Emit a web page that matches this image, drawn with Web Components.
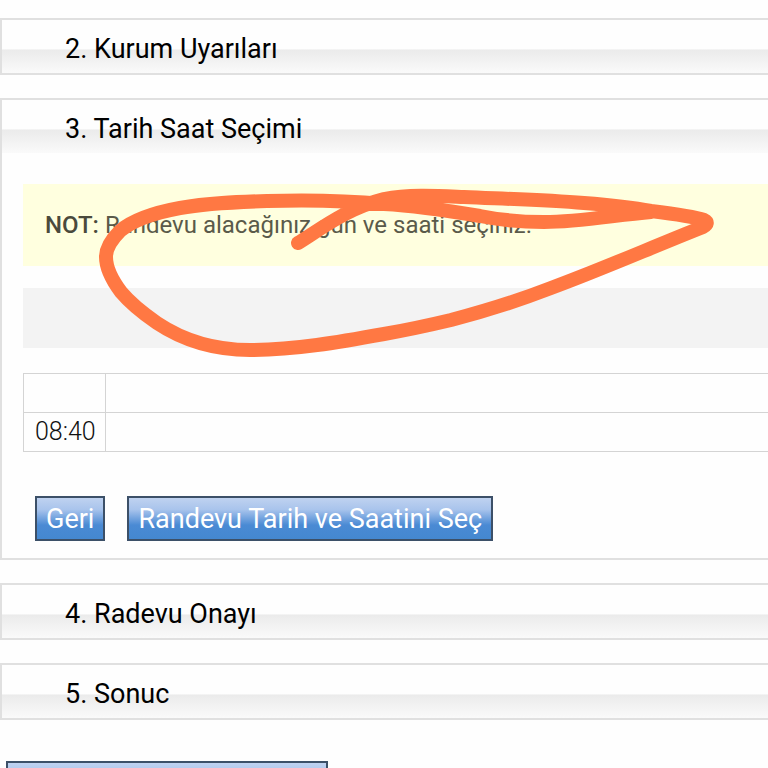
<!DOCTYPE html>
<html lang="tr">
<head>
<meta charset="utf-8">
<meta name="viewport" content="width=device-width, initial-scale=1">
<title>Randevu</title>
<style>
  html { scrollbar-width: none; }
  body {
    margin: 0;
    background: #fefefe;
    color: #111;
    font-family: Roboto, "Liberation Sans", sans-serif;
    font-size: 25px;
    line-height: 30px;
    overflow-x: hidden;
  }
</style>
</head>
<body>
<booking-page>
  <wizard-step label="2. Kurum Uyarıları"></wizard-step>
  <wizard-step label="3. Tarih Saat Seçimi" open>
    <note-box label="NOT:">Randevu alacağınız gün ve saati seçiniz.</note-box>
    <day-bar></day-bar>
    <slot-table times="08:40"></slot-table>
    <button-row>
      <action-button>Geri</action-button>
      <action-button>Randevu Tarih ve Saatini Seç</action-button>
    </button-row>
  </wizard-step>
  <wizard-step label="4. Radevu Onayı"></wizard-step>
  <wizard-step label="5. Sonuc"></wizard-step>
  <action-button slot="footer" wide label="Devam"></action-button>
  <pen-mark slot="overlay"></pen-mark>
</booking-page>

<script>
class BookingPage extends HTMLElement {
  constructor() {
    super();
    this.attachShadow({ mode: 'open' });
  }

  connectedCallback() {
    this.shadowRoot.innerHTML = `
      <style>
        :host {
          display: block;
          position: relative;
          padding-top: 18px;
        }
        main {
          display: flex;
          flex-direction: column;
          gap: 23px;
        }
        footer {
          padding: 41px 0 24px 6px;
        }
      </style>
      <main><slot></slot></main>
      <footer><slot name="footer"></slot></footer>
      <slot name="overlay"></slot>
    `;
  }
}

class WizardStep extends HTMLElement {
  constructor() {
    super();
    this.attachShadow({ mode: 'open' });
  }

  connectedCallback() {
    const label = this.getAttribute('label');
    const open = this.hasAttribute('open');
    this.shadowRoot.innerHTML = `
      <style>
        :host {
          display: block;
          border: 2px solid #e0e0e0;
          border-right: 0;
          background: #fefefe;
        }
        h2 {
          margin: 0;
          padding: 14px 24px 9px 63px;
          font-size: 27px;
          line-height: 30px;
          font-weight: 400;
          color: #000;
          background: linear-gradient(#fefefe 0 54%, #ebebeb 57%, #fafafa 100%);
        }
        .body {
          padding: 31px 0 17px 21px;
        }
      </style>
      <section>
        <h2>${label}</h2>
        ${open ? '<div class="body"><slot></slot></div>' : ''}
      </section>
    `;
  }
}

class NoteBox extends HTMLElement {
  constructor() {
    super();
    this.attachShadow({ mode: 'open' });
  }

  connectedCallback() {
    this.shadowRoot.innerHTML = `
      <style>
        :host {
          display: block;
          padding: 26px 22px;
          background: #ffffdf;
          color: #5a5a4a;
          font-size: 24px;
          font-weight: 400;
        }
        strong {
          color: #4a4a3c;
          font-weight: 500;
        }
      </style>
      <strong>${this.getAttribute('label')}</strong> <slot></slot>
    `;
  }
}

class DayBar extends HTMLElement {
  constructor() {
    super();
    this.attachShadow({ mode: 'open' });
  }

  connectedCallback() {
    this.shadowRoot.innerHTML = `
      <style>
        :host {
          display: block;
          min-height: 60px;
          margin: 22px 0 25px;
          background: #f3f3f3;
        }
      </style>
    `;
  }
}

class SlotTable extends HTMLElement {
  constructor() {
    super();
    this.attachShadow({ mode: 'open' });
  }

  connectedCallback() {
    const times = this.getAttribute('times').split(',');
    this.shadowRoot.innerHTML = `
      <style>
        :host { display: block; }
        table {
          width: 100%;
          border-collapse: collapse;
          font-weight: 300;
        }
        th, td {
          height: 30px;
          padding: 4px 9px 4px 11px;
          border: 1px solid #d4d4d4;
          border-right: 0;
          font-weight: inherit;
          text-align: left;
        }
        th:first-child, td:first-child { width: 59px; }
      </style>
      <table>
        <thead><tr><th></th><th></th></tr></thead>
        <tbody>
          ${times.map(time => `<tr><td>${time}</td><td></td></tr>`).join('')}
        </tbody>
      </table>
    `;
  }
}

class ButtonRow extends HTMLElement {
  constructor() {
    super();
    this.attachShadow({ mode: 'open' });
  }

  connectedCallback() {
    this.shadowRoot.innerHTML = `
      <style>
        :host {
          display: flex;
          flex-wrap: wrap;
          gap: 22px;
          padding: 44px 12px 0;
        }
      </style>
      <slot></slot>
    `;
  }
}

class ActionButton extends HTMLElement {
  constructor() {
    super();
    this.attachShadow({ mode: 'open' });
  }

  connectedCallback() {
    const label = this.getAttribute('label');
    this.shadowRoot.innerHTML = `
      <style>
        :host { display: inline-flex; }
        button {
          min-height: 45px;
          padding: 6px 9px 5px;
          border: 2px solid #3c5068;
          border-radius: 0;
          background: linear-gradient(#bfd2f0 0%, #a9c4ec 28%, #4a8ad4 66%, #4488d0 100%);
          color: #fff;
          font: inherit;
          font-size: 27px;
          line-height: 30px;
          cursor: pointer;
        }
        :host([wide]) button { min-width: 322px; }
      </style>
      <button type="button" ${label ? `aria-label="${label}"` : ''}><slot></slot></button>
    `;
  }
}

// freehand loop drawn over the note and the day bar
class PenMark extends HTMLElement {
  constructor() {
    super();
    this.attachShadow({ mode: 'open' });
  }

  connectedCallback() {
    this.shadowRoot.innerHTML = `
      <style>
        :host {
          position: absolute;
          top: 180px;
          left: 90px;
          pointer-events: none;
        }
        svg { display: block; }
      </style>
      <svg width="640" height="190" viewBox="90 180 640 190" fill="none"
        stroke="#ff7843" stroke-width="14" stroke-linecap="round" stroke-linejoin="round" aria-hidden="true">
        <path d="M298 243 C322 228 348 208 384 199 C410 194 440 196 464 197
          C510 199 545 200 584 203 C610 205 630 207 651 211 C675 214 695 217 704 220
          Q710 223 703 227 C650 248 600 270 551 288 C515 302 485 311 451 320
          C430 325 407 330 384 334 C340 342 294 350 250 350
          C214 350 184 341 157 323 C144 314 131 304 121 292
          C112 280 106 268 106 257 C106 247 112 239 120 231
          C134 219 158 212 180 208 C207 203 236 202 267 201
          C300 200 340 200 384 204 C420 206 450 211 480 216
          C500 220 522 222 544 222 C580 222 615 215 651 212"/>
      </svg>
    `;
  }
}

customElements.define('booking-page', BookingPage);
customElements.define('wizard-step', WizardStep);
customElements.define('note-box', NoteBox);
customElements.define('day-bar', DayBar);
customElements.define('slot-table', SlotTable);
customElements.define('button-row', ButtonRow);
customElements.define('action-button', ActionButton);
customElements.define('pen-mark', PenMark);
</script>
</body>
</html>
